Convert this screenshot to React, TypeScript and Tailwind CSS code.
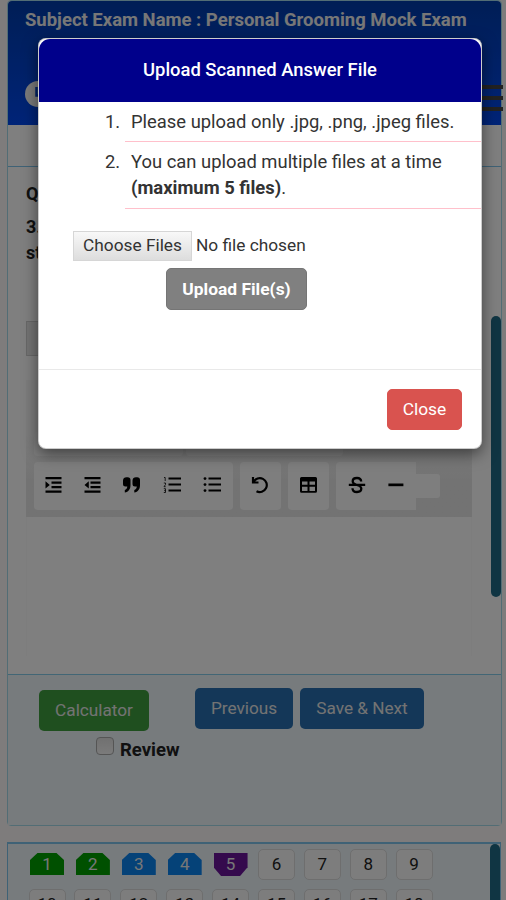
import React from "react";

type QuestionType = {
  no: number;
  status: "answered" | "marked" | "review" | "unseen";
};

const questions: QuestionType[] = Array.from({ length: 18 }, (_, i) => {
  const no = i + 1;
  const status =
    no <= 2 ? "answered" : no <= 4 ? "marked" : no === 5 ? "review" : "unseen";
  return { no, status };
});

const statusClasses: Record<QuestionType["status"], string> = {
  answered:
    "mt-[4px] h-[22px] w-[34px] bg-[#00a000] text-[#eee] [clip-path:polygon(22%_0,78%_0,100%_32%,100%_100%,0_100%,0_32%)]",
  marked:
    "mt-[4px] h-[22px] w-[34px] bg-[#0a84f0] text-[#eee] [clip-path:polygon(22%_0,78%_0,100%_32%,100%_100%,0_100%,0_32%)]",
  review:
    "mt-[4px] h-[23px] w-[34px] bg-[#6a149a] text-[#eee] [clip-path:polygon(0_0,100%_0,100%_62%,78%_100%,22%_100%,0_62%)]",
  unseen:
    "h-[31px] w-[37px] rounded-[5px] border border-[#dcdcdc] bg-[#fbfbfb] text-[#222]",
};

const QuestionButton: React.FC<QuestionType> = ({ no, status }) => (
  <div className="flex h-[40px] w-[46px] items-start justify-center">
    <button
      className={`flex items-center justify-center text-[17px] leading-none ${statusClasses[status]}`}
    >
      {no}
    </button>
  </div>
);

const IndentIcon = () => (
  <svg width="17" height="18" viewBox="0 0 17 18" fill="currentColor">
    <path d="M.5 1h16v2.200H.5zM6.500 5.500h10v2.200h-10zM6.500 10h10v2.200h-10zM.5 14.500h16v2.200H.5zM.5 5.200v7.400L4.800 8.900z" />
  </svg>
);

const OutdentIcon = () => (
  <svg width="17" height="18" viewBox="0 0 17 18" fill="currentColor">
    <path d="M.5 1h16v2.200H.5zM6.500 5.500h10v2.200h-10zM6.500 10h10v2.200h-10zM.5 14.500h16v2.200H.5zM4.800 5.200v7.400L.5 8.900z" />
  </svg>
);

const QuoteIcon = () => (
  <svg width="19" height="18" viewBox="0 0 19 18" fill="currentColor">
    <path d="M1 4.500a3.500 3.500 0 0 1 3.500-3.200h1.200A2.800 2.800 0 0 1 8.500 4v5c0 4.300-2 6.800-5.700 7.600v-2.500c1.500-.6 2.400-1.800 2.500-3.600H3.500A2.500 2.500 0 0 1 1 8zM10.500 4.500A3.500 3.500 0 0 1 14 1.300h1.200A2.800 2.800 0 0 1 18 4v5c0 4.300-2 6.800-5.700 7.600v-2.500c1.500-.6 2.400-1.800 2.500-3.600H13A2.500 2.500 0 0 1 10.500 8z" />
  </svg>
);

const OrderedIcon = () => (
  <svg width="19" height="18" viewBox="0 0 19 18" fill="currentColor">
    <path d="M5.500 1.600H18v2H5.500zM5.500 7.600H18v2H5.500zM5.500 13.600H18v2H5.500z" />
    <path
      d="M1 1.500h1.200V5M.8 7h1.700v1.500L1 10.700h1.700M.8 12.700h1.700v3.800H.8M1.200 14.600h1.300"
      fill="none"
      stroke="currentColor"
      strokeWidth="0.800"
    />
  </svg>
);

const BulletIcon = () => (
  <svg width="19" height="18" viewBox="0 0 19 18" fill="currentColor">
    <path d="M5.500 1.600h12.500v2H5.500zM5.500 7.600h12.500v2H5.500zM5.500 13.600h12.500v2H5.500z" />
    <circle cx="2" cy="2.600" r="1.400" />
    <circle cx="2" cy="8.600" r="1.400" />
    <circle cx="2" cy="14.600" r="1.400" />
  </svg>
);

const UndoIcon = () => (
  <svg
    width="19"
    height="18"
    viewBox="0 0 19 18"
    fill="none"
    stroke="currentColor"
    strokeWidth="2.200"
  >
    <path d="M2 1v5.500h5.500M2.500 6A7 7 0 1 1 5.500 15.300" />
  </svg>
);

const TableIcon = () => (
  <svg width="19" height="18" viewBox="0 0 19 18">
    <path
      fill="currentColor"
      fillRule="evenodd"
      d="M2.500 1h14A1.500 1.500 0 0 1 18 2.500v12.800a1.500 1.500 0 0 1-1.500 1.500h-14A1.500 1.500 0 0 1 1 15.300V2.500A1.500 1.500 0 0 1 2.500 1zM3 5.500v3.300h5.500V5.500zm7.500 0v3.300H16V5.500zM3 10.800V15h5.500v-4.200zm7.500 0V15H16v-4.200z"
    />
  </svg>
);

const StrikeIcon = () => (
  <svg
    width="18"
    height="18"
    viewBox="0 0 18 18"
    fill="none"
    stroke="currentColor"
    strokeWidth="2.300"
  >
    <path d="M.8 8.800h16.400M13.200 5.500C13 3.300 11.300 2 9 2S4.700 3.200 4.700 5.300C4.700 7.400 6.500 8.300 9 9s4.300 1.500 4.300 3.600S11.500 16 9 16s-4.500-1.300-4.500-3.800" />
  </svg>
);

const MinusIcon = () => (
  <svg width="16" height="18" viewBox="0 0 16 18" fill="currentColor">
    <path d="M.4 7.500h15v2.700H.4z" />
  </svg>
);

const EditorToolbar = () => (
  <div className="flex h-[137px] w-[446px] flex-col justify-end bg-linear-to-b from-[#f8f8f8] from-40% to-[#e6e6e6] to-75% pb-[7px] pl-[8px] text-black">
    <div className="mb-[6px] flex h-[24px] gap-[3px]">
      <div className="w-[149px] rounded-[4px] bg-[#fdfdfd]" />
      <div className="w-[157px] rounded-[4px] bg-[#fdfdfd]" />
    </div>
    <div className="flex items-center">
      <div className="flex h-[48px] w-[199px] items-center justify-between rounded-[4px] bg-[#fdfdfd] px-[11px] pb-[2px]">
        <IndentIcon />
        <OutdentIcon />
        <QuoteIcon />
        <OrderedIcon />
        <BulletIcon />
      </div>
      <div className="ml-[7px] flex h-[48px] w-[41px] items-center justify-center rounded-[4px] bg-[#fdfdfd] pb-[2px]">
        <UndoIcon />
      </div>
      <div className="ml-[7px] flex h-[48px] w-[41px] items-center justify-center rounded-[4px] bg-[#fdfdfd] pb-[2px]">
        <TableIcon />
      </div>
      <div className="ml-[7px] flex h-[48px] w-[80px] items-center gap-[22px] rounded-l-[4px] bg-[#fdfdfd] pb-[2px] pl-[12px]">
        <StrikeIcon />
        <MinusIcon />
      </div>
      <div className="h-[24px] w-[24px] rounded-r-[3px] bg-[#fdfdfd]" />
    </div>
  </div>
);

const UploadModal = () => (
  <div className="absolute left-[38px] top-[38px] flex h-[411px] w-[444px] flex-col overflow-hidden rounded-[8px] border border-black/20 bg-white text-[#333] shadow-[0_5px_15px_rgba(0,0,0,0.5)]">
    <div className="flex h-[63px] shrink-0 items-center justify-center rounded-t-[11px] bg-[#00008b] pb-[1px] text-[18.4px] font-medium text-white">
      Upload Scanned Answer File
    </div>
    <ol className="pl-[86px] text-[18.4px] leading-[26px]">
      <li className="relative flex h-[40px] items-center border-b border-[#ffc0cb] pl-[6px] pt-[1px]">
        <span className="absolute -left-[20px]">1.</span>
        Please upload only .jpg, .png, .jpeg files.
      </li>
      <li className="relative h-[67px] border-b border-[#ffc0cb] pl-[6px] pt-[7px]">
        <span className="absolute -left-[20px]">2.</span>
        You can upload multiple files at a time
        <br />
        <b>(maximum 5 files)</b>.
      </li>
    </ol>
    <div className="mt-[22px] flex items-center pl-[34px] text-[17.3px]">
      <button className="mr-[4px] h-[30px] w-[119px] border border-[#d6d6d6] bg-linear-to-b from-[#f8f8f8] to-[#dddddd]">
        Choose Files
      </button>
      No file chosen
    </div>
    <button className="ml-[127px] mt-[7px] h-[42px] w-[141px] shrink-0 rounded-[5px] border border-[#757575] bg-[#808080] text-[17.4px] font-bold text-white">
      Upload File(s)
    </button>
    <div className="mt-[59px] flex flex-1 justify-end border-t border-[#e9e9e9] pr-[19px] pt-[19px]">
      <button className="h-[41px] w-[75px] rounded-[5px] border border-[#d9534f] bg-[#d9534f] text-[17.4px] text-white">
        Close
      </button>
    </div>
  </div>
);

const App: React.FC = () => {
  return (
    <div
      className="relative h-[900px] w-[506px] overflow-hidden bg-[#fdf9f9] pl-[7px] text-[#222]"
      style={{ fontFamily: 'Roboto, "Liberation Sans", sans-serif' }}
    >
      <div className="h-[826px] w-[495px] rounded-[4px] border border-[#a5dbea] bg-white">
        <header className="h-[124px] rounded-t-[4px] bg-linear-to-b from-[#003cac] to-[#0048f0] pl-[17px] pt-[7px]">
          <h1 className="text-[18.48px] font-bold leading-[24px] text-[#eeeeee]">
            Subject Exam Name : Personal Grooming Mock Exam
          </h1>
          <div className="mt-[49px] flex items-start justify-between">
            <svg width="26" height="26" viewBox="0 0 26 26">
              <circle cx="13" cy="13" r="13" fill="#f4f4f4" />
              <path
                d="M11.500 6v8.500h6"
                fill="none"
                stroke="#0044cc"
                strokeWidth="2.500"
              />
            </svg>
            <div className="-mr-[2px] mt-[4px] flex w-[24px] flex-col gap-[7px]">
              <div className="h-[4px] bg-[#444]" />
              <div className="h-[4px] bg-[#444]" />
              <div className="h-[4px] bg-[#444]" />
            </div>
          </div>
        </header>
        <div className="h-[42px] border-b border-[#7fc4ec]" />
        <div className="flex h-[508px] justify-between border-b border-[#84cdea] pl-[18px]">
          <div className="pt-[14px] text-[18px] font-bold">
            <div className="leading-[26px]">Question</div>
            <div className="mt-[7px] leading-[26px]">3. Explain the</div>
            <div className="leading-[26px]">steps</div>
            <div className="mt-[55px] h-[35px] w-[100px] border border-[#cfcfcf] bg-[#e6e6e6]" />
            <div className="mt-[24px]">
              <EditorToolbar />
            </div>
            <div className="h-[139px] w-[446px] border-x border-[#fafafa]" />
          </div>
          <div className="mt-[149px] h-[281px] w-[10px] rounded-full bg-[#216b86]" />
        </div>
        <div className="h-[150px] bg-[#eef6fb] pl-[31px] pt-[13px] text-[17.2px]">
          <div className="flex items-start text-[#e6e6e6]">
            <button className="mt-[2px] h-[41px] w-[110px] rounded-[5px] bg-[#3f9f3f]">
              Calculator
            </button>
            <button className="ml-[46px] h-[41px] w-[98px] rounded-[5px] bg-[#286fb0]">
              Previous
            </button>
            <button className="ml-[7px] h-[41px] w-[124px] rounded-[5px] bg-[#286fb0]">
              Save &amp; Next
            </button>
          </div>
          <div className="mt-[6px] flex pl-[57px]">
            <div className="h-[18px] w-[18px] rounded-[4px] border border-[#aaa] bg-linear-to-b from-[#e2e2e2] to-[#f6f6f6]" />
            <span className="ml-[6px] mt-[1px] text-[18.5px] font-bold leading-[24px]">
              Review
            </span>
          </div>
        </div>
      </div>
      <div className="mt-[16px] flex h-[70px] w-[494px] justify-between border border-t-2 border-[#7fc4ec] bg-[#eef6fb] pl-[16px]">
        <div className="grid h-max grid-cols-[repeat(9,45.9px)] pt-[5px]">
          {questions.map((question) => (
            <QuestionButton key={question.no} {...question} />
          ))}
        </div>
        <div className="h-[120px] w-[10px] rounded-full bg-[#216b86]" />
      </div>

      <div className="absolute inset-0 bg-black/50" />
      <UploadModal />
    </div>
  );
};

export default App;
